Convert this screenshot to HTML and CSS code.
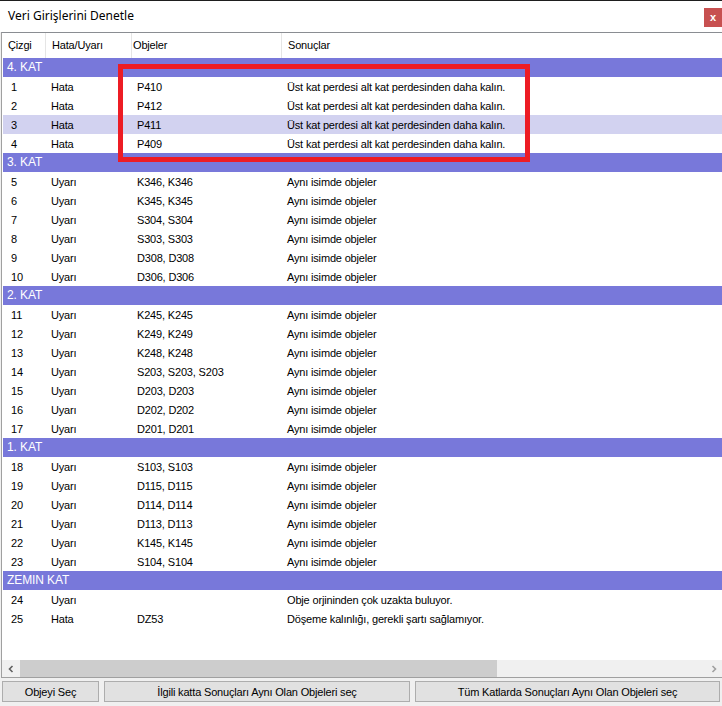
FILE: index.html
```html
<!DOCTYPE html>
<html lang="tr">
<head>
<meta charset="utf-8">
<title>Veri Girişlerini Denetle</title>
<link rel="stylesheet" href="styles.css">
</head>
<body>
<div class="window">
  <div class="titlebar">
    <span class="title">Veri Girişlerini Denetle</span>
    <span class="close">x</span>
  </div>
  <div class="grid">
    <div class="head row">
      <div class="c1">Çizgi</div><div class="c2">Hata/Uyarı</div><div class="c3">Objeler</div><div class="c4">Sonuçlar</div>
    </div>
    <div class="body">
      <div class="group">4. KAT</div>
      <div class="row"><div class="c1">1</div><div class="c2">Hata</div><div class="c3">P410</div><div class="c4">Üst kat perdesi alt kat perdesinden daha kalın.</div></div>
      <div class="row"><div class="c1">2</div><div class="c2">Hata</div><div class="c3">P412</div><div class="c4">Üst kat perdesi alt kat perdesinden daha kalın.</div></div>
      <div class="row selected"><div class="c1">3</div><div class="c2">Hata</div><div class="c3">P411</div><div class="c4">Üst kat perdesi alt kat perdesinden daha kalın.</div></div>
      <div class="row"><div class="c1">4</div><div class="c2">Hata</div><div class="c3">P409</div><div class="c4">Üst kat perdesi alt kat perdesinden daha kalın.</div></div>
      <div class="group">3. KAT</div>
      <div class="row"><div class="c1">5</div><div class="c2">Uyarı</div><div class="c3">K346, K346</div><div class="c4">Aynı isimde objeler</div></div>
      <div class="row"><div class="c1">6</div><div class="c2">Uyarı</div><div class="c3">K345, K345</div><div class="c4">Aynı isimde objeler</div></div>
      <div class="row"><div class="c1">7</div><div class="c2">Uyarı</div><div class="c3">S304, S304</div><div class="c4">Aynı isimde objeler</div></div>
      <div class="row"><div class="c1">8</div><div class="c2">Uyarı</div><div class="c3">S303, S303</div><div class="c4">Aynı isimde objeler</div></div>
      <div class="row"><div class="c1">9</div><div class="c2">Uyarı</div><div class="c3">D308, D308</div><div class="c4">Aynı isimde objeler</div></div>
      <div class="row"><div class="c1">10</div><div class="c2">Uyarı</div><div class="c3">D306, D306</div><div class="c4">Aynı isimde objeler</div></div>
      <div class="group">2. KAT</div>
      <div class="row"><div class="c1">11</div><div class="c2">Uyarı</div><div class="c3">K245, K245</div><div class="c4">Aynı isimde objeler</div></div>
      <div class="row"><div class="c1">12</div><div class="c2">Uyarı</div><div class="c3">K249, K249</div><div class="c4">Aynı isimde objeler</div></div>
      <div class="row"><div class="c1">13</div><div class="c2">Uyarı</div><div class="c3">K248, K248</div><div class="c4">Aynı isimde objeler</div></div>
      <div class="row"><div class="c1">14</div><div class="c2">Uyarı</div><div class="c3">S203, S203, S203</div><div class="c4">Aynı isimde objeler</div></div>
      <div class="row"><div class="c1">15</div><div class="c2">Uyarı</div><div class="c3">D203, D203</div><div class="c4">Aynı isimde objeler</div></div>
      <div class="row"><div class="c1">16</div><div class="c2">Uyarı</div><div class="c3">D202, D202</div><div class="c4">Aynı isimde objeler</div></div>
      <div class="row"><div class="c1">17</div><div class="c2">Uyarı</div><div class="c3">D201, D201</div><div class="c4">Aynı isimde objeler</div></div>
      <div class="group">1. KAT</div>
      <div class="row"><div class="c1">18</div><div class="c2">Uyarı</div><div class="c3">S103, S103</div><div class="c4">Aynı isimde objeler</div></div>
      <div class="row"><div class="c1">19</div><div class="c2">Uyarı</div><div class="c3">D115, D115</div><div class="c4">Aynı isimde objeler</div></div>
      <div class="row"><div class="c1">20</div><div class="c2">Uyarı</div><div class="c3">D114, D114</div><div class="c4">Aynı isimde objeler</div></div>
      <div class="row"><div class="c1">21</div><div class="c2">Uyarı</div><div class="c3">D113, D113</div><div class="c4">Aynı isimde objeler</div></div>
      <div class="row"><div class="c1">22</div><div class="c2">Uyarı</div><div class="c3">K145, K145</div><div class="c4">Aynı isimde objeler</div></div>
      <div class="row"><div class="c1">23</div><div class="c2">Uyarı</div><div class="c3">S104, S104</div><div class="c4">Aynı isimde objeler</div></div>
      <div class="group">ZEMIN KAT</div>
      <div class="row"><div class="c1">24</div><div class="c2">Uyarı</div><div class="c3"></div><div class="c4">Obje orjininden çok uzakta buluyor.</div></div>
      <div class="row"><div class="c1">25</div><div class="c2">Hata</div><div class="c3">DZ53</div><div class="c4">Döşeme kalınlığı, gerekli şartı sağlamıyor.</div></div>
    </div>
    <div class="hscroll">
      <div class="arrow"><svg width="8" height="8" viewBox="0 0 8 8"><path d="M5.5 1 L2.5 4 L5.5 7" fill="none" stroke="#606060" stroke-width="1.6"/></svg></div>
      <div class="track"><div class="thumb"></div></div>
      <div class="arrow"><svg width="8" height="8" viewBox="0 0 8 8"><path d="M2.5 1 L5.5 4 L2.5 7" fill="none" stroke="#a0a0a0" stroke-width="1.6"/></svg></div>
    </div>
    <div class="highlight"></div>
  </div>
  <div class="buttons">
    <button class="btn b1">Objeyi Seç</button>
    <button class="btn b2">İlgili katta Sonuçları Aynı Olan Objeleri seç</button>
    <button class="btn b3">Tüm Katlarda Sonuçları Aynı Olan Objeleri seç</button>
  </div>
</div>
</body>
</html>
```

FILE: styles.css
```css
* { box-sizing: border-box; }
html, body { margin: 0; padding: 0; }
body {
  width: 722px;
  height: 706px;
  overflow: hidden;
  background: #f0f0f0;
  font-family: "Liberation Sans", Arial, sans-serif;
  font-size: 11px;
  letter-spacing: -0.17px;
  color: #000;
}
.window {
  width: 722px;
  height: 706px;
  display: flex;
  flex-direction: column;
  border-top: 1px solid #1e1e1e;
}
.titlebar {
  height: 31px;
  background: #fff;
  display: flex;
  align-items: flex-start;
  justify-content: space-between;
  flex: none;
}
.title {
  font-family: "Noto Sans", "Liberation Sans", sans-serif;
  font-size: 12px;
  letter-spacing: 0;
  padding: 7px 0 0 8px;
  line-height: 16px;
}
.close {
  margin-top: 7px;
  width: 18px;
  height: 19px;
  background: #c75050;
  color: #fff;
  font-weight: bold;
  font-size: 11px;
  line-height: 18px;
  text-align: center;
  letter-spacing: 0;
}
.grid {
  position: relative;
  flex: none;
  height: 646px;
  margin-left: 1px;
  background: #fff;
  border-top: 1px solid #8a8d92;
  border-left: 1px solid #a0a0a0;
  border-bottom: 1px solid #a0a0a0;
  display: flex;
  flex-direction: column;
  padding-left: 1px;
}
.row {
  display: grid;
  grid-template-columns: 43px 86px 150px 1fr;
  height: 19px;
  padding-top: 2px;
  line-height: 17px;
  white-space: nowrap;
}
.head {
  height: 25px;
  padding-top: 0;
  line-height: 24px;
}
.head > div { border-right: 1px solid #e5e5e5; }
.head > div:last-child { border-right: none; }
.body { flex: 1; }
.row .c1 { padding-left: 8px; }
.row .c2, .row .c3, .row .c4 { padding-left: 5px; }
.head.row .c1 { padding-left: 5px; }
.head.row .c2 { padding-left: 6px; }
.head.row .c3 { padding-left: 1px; }
.head.row .c4 { padding-left: 6px; }
.selected { background: #d2d2f0; }
.group {
  height: 19px;
  line-height: 19px;
  background: #7878da;
  color: #fff;
  padding-left: 4px;
  font-size: 12px;
  letter-spacing: -0.1px;
}
.hscroll {
  height: 17px;
  display: flex;
  background: #f0f0f0;
  margin-left: -1px;
}
.arrow {
  width: 17px;
  height: 17px;
  display: flex;
  align-items: center;
  justify-content: center;
  flex: none;
}
.track {
  flex: 1;
  display: flex;
  align-items: stretch;
}
.thumb {
  width: 477px;
  margin-left: 1px;
  background: #cdcdcd;
}
.highlight {
  position: absolute;
  left: 116px;
  top: 31px;
  width: 412px;
  height: 98px;
  border: 5px solid #ed1c24;
}
.buttons {
  display: flex;
  gap: 5px;
  padding: 3px 2px 0 2px;
}
.btn {
  height: 21px;
  background: #e1e1e1;
  border: 1px solid #adadad;
  font-family: "Liberation Sans", Arial, sans-serif;
  font-size: 11px;
  letter-spacing: -0.17px;
  color: #000;
  padding: 0;
}
.b1 { width: 97px; }
.b2 { width: 306px; }
.b3 { flex: 1; }
```
